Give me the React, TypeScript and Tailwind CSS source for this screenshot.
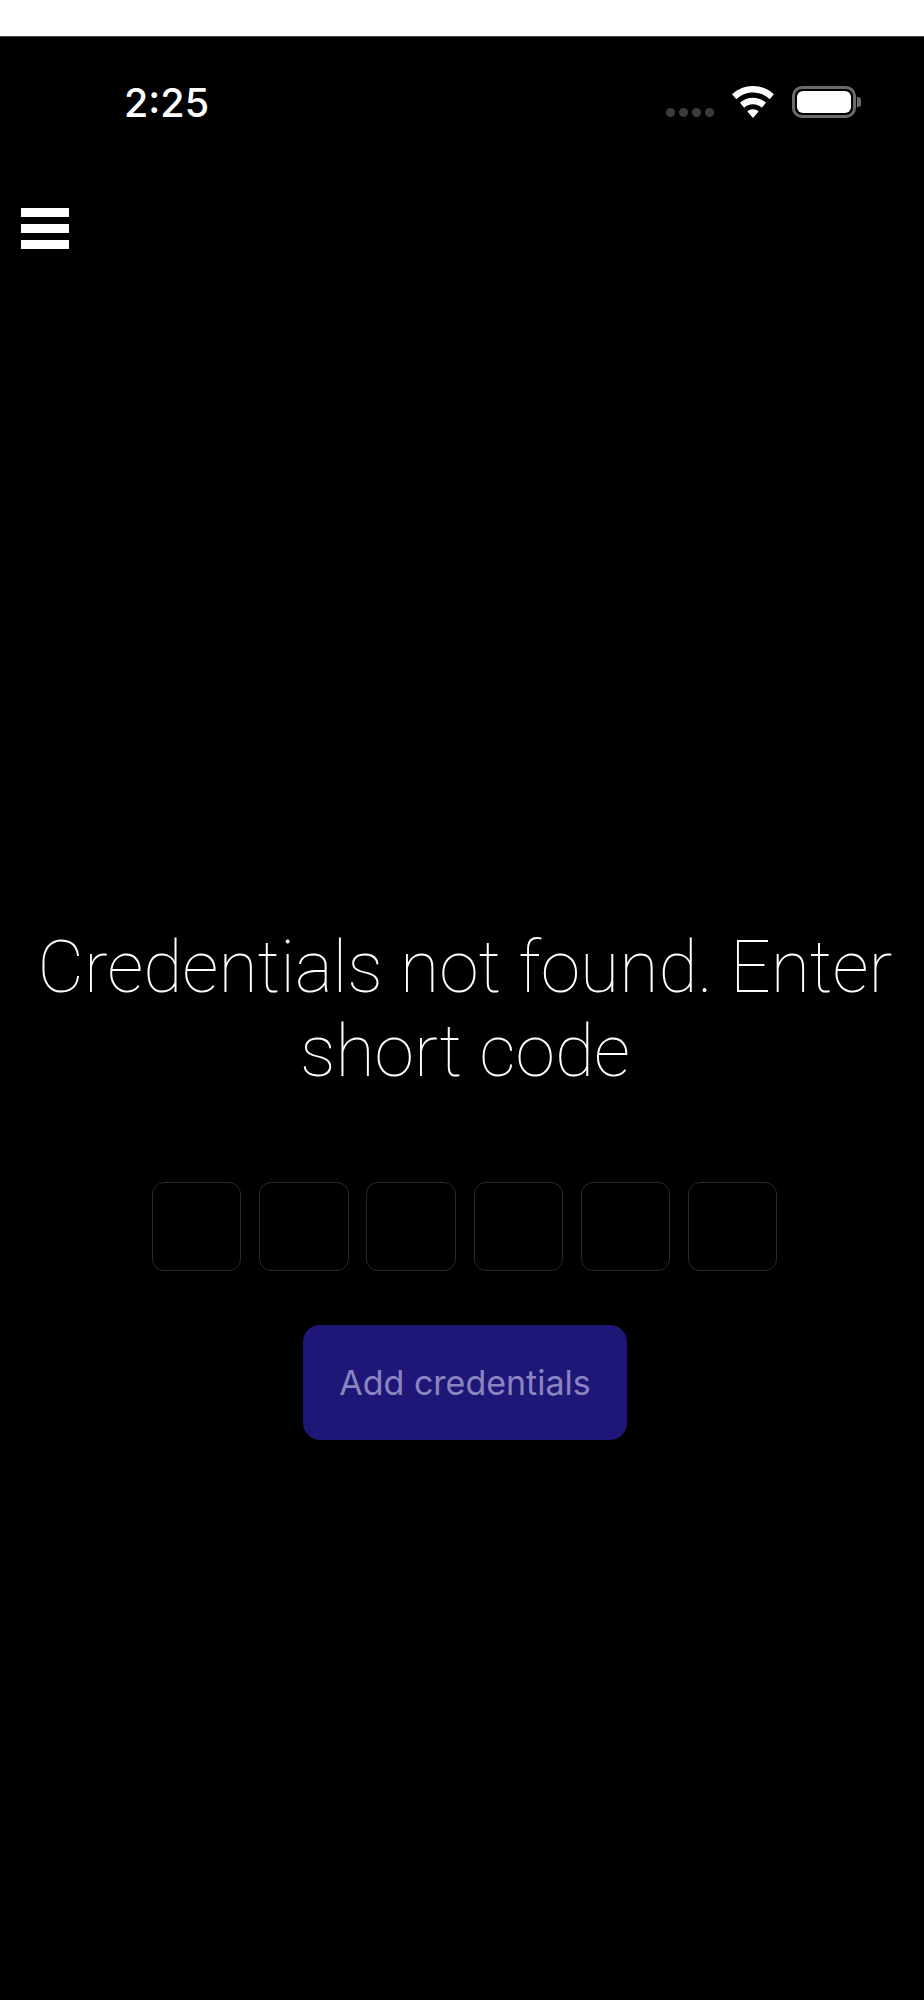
import React from 'react';

const codeSlots = [0, 1, 2, 3, 4, 5];

function StatusBar() {
  return (
    <div className="h-[130px] pl-[124px] pr-[63px] pt-[44px] flex justify-between items-start">
      <span className="text-[39.5px] leading-[44px] font-medium text-white font-['Inter',sans-serif]">2:25</span>
      <div className="flex items-start mt-[5px]">
        <div className="flex gap-[4px] mt-[22px] mr-[17px]">
          {[0, 1, 2, 3].map((i) => (
            <span key={i} className="w-[9px] h-[9px] rounded-full bg-[#3c3c3c]" />
          ))}
        </div>
        <svg width="44" height="33" viewBox="0 0 44 34" className="mr-[17px]" fill="#fff">
          <path d="M22 0C13.5 0 6 3.2.5 8.6l4.3 5C9.300 9.300 15.300 6.600 22 6.600s12.700 2.700 17.200 7l4.300-5C38 3.200 30.500 0 22 0z" />
          <path d="M22 12c-5.200 0-9.900 2-13.400 5.300l4.300 5c2.300-2.200 5.500-3.600 9.100-3.600s6.800 1.400 9.100 3.600l4.300-5C31.900 14 27.200 12 22 12z" />
          <path d="M22 24c-2.300 0-4.300.9-5.800 2.300L22 33l5.800-6.700C26.300 24.900 24.300 24 22 24z" />
        </svg>
        <div className="flex items-center">
          <div className="w-[64px] h-[32px] rounded-[10px] border-[3px] border-[#6a6a6a] p-[2px]">
            <div className="w-full h-full rounded-[6px] bg-white" />
          </div>
          <div className="w-[4px] h-[10px] rounded-r-[3px] bg-[#6a6a6a] ml-[1px]" />
        </div>
      </div>
    </div>
  );
}

export default function App() {
  return (
    <div className="h-[2000px] bg-black flex flex-col font-['Roboto',sans-serif]">
      <div className="h-[36px] bg-white border-b border-[#444444] box-content" />
      <StatusBar />
      <button className="ml-[21px] mt-[41px] w-[48px] flex flex-col gap-[7px]">
        <span className="h-[9px] bg-white" />
        <span className="h-[9px] bg-white" />
        <span className="h-[9px] bg-white" />
      </button>
      <h1 className="mt-[677px] pl-[23px] pr-[17px] text-center text-[71.5px] leading-[84px] font-thin text-white">
        Credentials not found. Enter short code
      </h1>
      <div className="mt-[88px] ml-[152px] flex gap-[17.8px]">
        {codeSlots.map((slot) => (
          <div key={slot} className="w-[89.4px] h-[89px] rounded-[12px] border border-[#2a2a2a]" />
        ))}
      </div>
      <button className="mt-[54px] ml-[303px] w-[324px] h-[115px] rounded-[17px] bg-[#1e1777] text-[#8a84c0] text-[34px] font-['Inter',sans-serif]">
        Add credentials
      </button>
    </div>
  );
}
